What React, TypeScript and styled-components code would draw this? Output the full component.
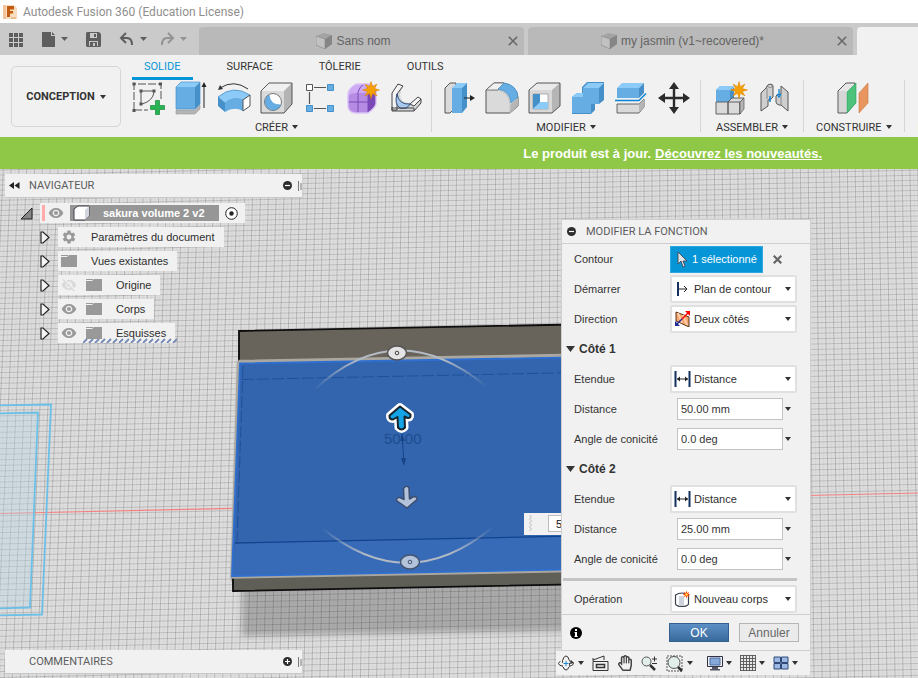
import React from "react";
import styled, { createGlobalStyle } from "styled-components";
import { MdVisibility, MdVisibilityOff, MdSettings } from "react-icons/md";
import { FaRegHandPaper } from "react-icons/fa";

const sans = '"Liberation Sans", Arial, sans-serif';
const caps = 'Roboto, "Liberation Sans", sans-serif';

const GlobalStyle = createGlobalStyle`
  *, *::before, *::after { box-sizing: border-box; }
  html, body { margin: 0; }
  body { font-family: ${sans}; font-size: 11px; color: #333; background: #dedede; }
  button, input, select { font: inherit; color: inherit; margin: 0; }
  button { padding: 0; border: 0; background: none; white-space: nowrap; cursor: pointer; }
  svg { display: block; flex: none; }
`;

const Page = styled.div`
  display: flex;
  flex-direction: column;
  min-height: 100vh;
  overflow: hidden;
`;

/* ---------- window title and document tabs ---------- */

const TitleBar = styled.header`
  display: flex;
  align-items: center;
  gap: 5px;
  height: 23px;
  padding-left: 2px;
  background: #fff;
  color: #8f8f8f;
  font: 12px/16px ${caps};
`;

const TabBar = styled.div`
  display: flex;
  align-items: stretch;
  height: 32px;
  background: #cacaca;
  overflow: hidden;
`;

const QuickBar = styled.div`
  display: flex;
  align-items: center;
  flex: 0 0 199px;
  padding-left: 8px;
  color: #5e5e5e;
`;

const QuickButton = styled.button<{ $gap: number; $dim?: boolean }>`
  display: flex;
  align-items: center;
  gap: 5px;
  margin-right: ${(p) => p.$gap}px;
  opacity: ${(p) => (p.$dim ? 0.5 : 1)};
`;

const DocTab = styled.div<{ $active?: boolean }>`
  display: flex;
  align-items: center;
  flex: 0 0 325px;
  margin: 4px 4px 0 0;
  padding-right: 6px;
  border-radius: 4px 4px 0 0;
  background: ${(p) => (p.$active ? "#f1f1f1" : "#b9b9b9")};
`;

const DocTitle = styled.button`
  display: flex;
  align-items: center;
  justify-content: center;
  gap: 4px;
  flex: 1;
  color: #636363;
  font-size: 12px;
`;

/* ---------- ribbon ---------- */

const Ribbon = styled.section`
  display: flex;
  height: 82px;
  background: #f1f1f1;
  overflow: hidden;
  font-family: ${caps};
`;

const WorkspaceButton = styled.button`
  display: flex;
  align-items: center;
  justify-content: center;
  gap: 5px;
  flex: 0 0 110px;
  height: 61px;
  margin: 11px 4px 0 11px;
  border: 1px solid #d6d6d6;
  border-radius: 5px;
  font-weight: 700;
`;

const RibbonMain = styled.div`
  flex: 1;
  min-width: 0;
`;

const RibbonTabs = styled.nav`
  display: flex;
  gap: 22px;
  padding-left: 7px;
`;

const RibbonTab = styled.button<{ $active?: boolean }>`
  height: 25px;
  padding: 0 12px;
  border-bottom: 3px solid ${(p) => (p.$active ? "#0696d7" : "transparent")};
  color: ${(p) => (p.$active ? "#0696d7" : "#333")};
`;

const Groups = styled.div`
  display: flex;
`;

const Group = styled.div<{ $left: number; $right: number }>`
  display: flex;
  flex-direction: column;
  align-items: center;
  flex: none;
  height: 52px;
  padding: 0 ${(p) => p.$right}px 0 ${(p) => p.$left}px;
  border-right: 1px solid #d6d6d6;
`;

const Tools = styled.div`
  display: flex;
`;

const Tool = styled.button`
  display: grid;
  place-items: center;
  width: 43px;
  height: 36px;
`;

const GroupLabel = styled.button`
  display: flex;
  align-items: center;
  gap: 4px;
  flex: none;
  height: 22px;
`;

const Notice = styled.div`
  display: flex;
  justify-content: flex-end;
  align-items: center;
  gap: 4px;
  height: 32px;
  padding-right: 96px;
  background: #8fc846;
  color: #fff;
  font-size: 13px;
  font-weight: 700;
  a { color: inherit; }
`;

/* ---------- canvas ---------- */

const Canvas = styled.main`
  position: relative;
  display: flex;
  justify-content: space-between;
  flex: 1;
`;

const Scene = styled.svg`
  position: absolute;
  inset: 0;
  width: 100%;
  height: 100%;
`;

const LeftDock = styled.div`
  position: relative;
  display: flex;
  flex-direction: column;
  justify-content: space-between;
  width: 298px;
  margin: 5px 0 4px 5px;
`;

const RightDock = styled.div`
  position: relative;
  display: flex;
  flex-direction: column;
  align-items: flex-end;
  justify-content: space-between;
  width: 255px;
  margin: 50px 107px 3px 0;
`;

const PanelBar = styled.div`
  display: flex;
  align-items: center;
  gap: 6px;
  height: 24px;
  padding: 0 0 0 4px;
  border-bottom: 1px solid #c8c8c8;
  border-right: 1px solid #d0d0d0;
  background: #f1f1f1;
  color: #5c5c5c;
  font-family: ${caps};
`;

const PanelTitle = styled.span<{ $indent?: boolean }>`
  flex: 1;
  padding-left: ${(p) => (p.$indent ? 20 : 3)}px;
`;

const Tree = styled.ul`
  display: flex;
  flex-direction: column;
  gap: 4px;
  margin: 5px 0 0;
  padding: 0;
  list-style: none;
`;

const TreeRow = styled.li<{ $root?: boolean }>`
  display: flex;
  align-items: center;
  gap: ${(p) => (p.$root ? 7 : 8)}px;
  padding-left: ${(p) => (p.$root ? 15 : 35)}px;
`;

const TreeItem = styled.div`
  display: flex;
  align-items: center;
  gap: 9px;
  height: 20px;
  padding: 0 9px 0 3px;
  background: #f1f1f1;
  color: #2e2e2e;
`;

const SketchItem = styled(TreeItem)`
  position: relative;
`;

const HatchSvg = styled.svg`
  position: absolute;
  left: 25px;
  bottom: 0;
`;

const TreeLabel = styled.span`
  padding-left: 5px;
`;

const RootItem = styled.div`
  display: flex;
  align-items: center;
  gap: 6px;
  height: 20px;
  padding: 0 7px 0 2px;
  background: #f1f1f1;
`;

const Stripe = styled.span`
  width: 3px;
  height: 16px;
  margin-right: -3px;
  background: #ffabab;
`;

const RootName = styled.button`
  display: flex;
  align-items: center;
  gap: 13px;
  height: 16px;
  padding: 0 14px 0 3px;
  background: #969696;
  color: #fff;
  font-size: 11px;
  font-weight: 700;
`;

const FloatingValue = styled.label`
  position: absolute;
  left: 524px;
  top: 344px;
  display: flex;
  align-items: center;
  gap: 16px;
  padding: 2px 2px 3px 5px;
  background: #f1f1f1;
  input {
    width: 60px;
    height: 17px;
    padding: 0 7px;
    border: 1px solid #bdbdbd;
    background: #fff;
    color: #111;
  }
`;

/* ---------- edit-feature dialog ---------- */

const Dialog = styled.form`
  width: 250px;
  border: 1px solid #cfcfcf;
  background: #f1f1f1;
`;

const DialogHead = styled.div`
  display: flex;
  align-items: center;
  gap: 10px;
  height: 24px;
  padding-left: 5px;
  border-bottom: 1px solid #cfcfcf;
  color: #5c5c5c;
  font-family: ${caps};
`;

const Field = styled.div`
  display: grid;
  grid-template-columns: 96px 1fr;
  align-items: center;
  height: 30px;
  padding: 0 12px;
`;

const Section = styled.button`
  display: flex;
  align-items: center;
  gap: 4px;
  height: 30px;
  padding-left: 4px;
  font-weight: 700;
  font-size: 12px;
`;

const SelectBox = styled.div`
  display: flex;
  align-items: center;
  gap: 3px;
  height: 28px;
  width: 127px;
  padding: 0 4px 0 2px;
  border: 2px solid #e0e0e0;
  border-radius: 2px;
  background: #fff;
  select {
    flex: 1;
    min-width: 0;
    padding: 0;
    border: 0;
    background: transparent;
    appearance: none;
    color: #2e2e2e;
  }
`;

const ValueBox = styled.div`
  display: flex;
  align-items: center;
  gap: 2px;
  padding-left: 7px;
  input {
    width: 106px;
    height: 22px;
    padding: 0 3px;
    border: 1px solid #c3c3c3;
    background: #fff;
  }
`;

const Picker = styled.div`
  display: flex;
  align-items: center;
  gap: 10px;
`;

const PickButton = styled.button`
  display: flex;
  align-items: center;
  gap: 4px;
  height: 27px;
  padding: 0 5px 0 6px;
  border: 1px solid #2ea8e0;
  background: #0696d7;
  color: #fff;
`;

const Divider = styled.hr`
  height: 3px;
  margin: 4px 13px 3px 1px;
  border: 0;
  background: #c4c4c4;
`;

const DialogFoot = styled.div`
  display: flex;
  align-items: center;
  gap: 10px;
  height: 36px;
  padding: 0 11px 0 8px;
  border-top: 1px solid #cfcfcf;
`;

const Spacer = styled.span`
  flex: 1;
`;

const DialogButton = styled.button<{ $primary?: boolean }>`
  width: 60px;
  height: 19px;
  border: 1px solid ${(p) => (p.$primary ? "#35618f" : "#b5b5b5")};
  background: ${(p) => (p.$primary ? "linear-gradient(#5b90c4, #3a6a9c)" : "#ebebeb")};
  color: ${(p) => (p.$primary ? "#fff" : "#686868")};
  font-size: 12px;
`;

const ViewBar = styled.div`
  display: flex;
  align-items: center;
  justify-content: space-between;
  align-self: stretch;
  height: 24px;
  margin-right: 1px;
  padding: 0 12px 0 2px;
  background: #f1f1f1;
`;

const ViewGroup = styled.div`
  display: flex;
  align-items: center;
  gap: 8px;
`;

const ViewTool = styled.button`
  display: flex;
  align-items: center;
  gap: 3px;
`;

/* ---------- small glyphs ---------- */

const Caret = ({ w = 6, color = "#333" }: { w?: number; color?: string }) => (
  <svg width={w} height={w > 8 ? 6 : 4} viewBox="0 0 6 5" preserveAspectRatio="none"><path d="M0 0h6L3 5z" fill={color} /></svg>
);

const Dot = ({ plus }: { plus?: boolean }) => (
  <svg width="9" height="9" viewBox="0 0 9 9">
    <circle cx="4.5" cy="4.5" r="4.5" fill="#2d2d2d" />
    <path d={plus ? "M2 4.5h5M4.5 2v5" : "M2 4.5h5"} stroke="#fff" strokeWidth="1.2" />
  </svg>
);

const Cross = ({ size = 9, bold }: { size?: number; bold?: boolean }) => (
  <svg width={size} height={size} viewBox="0 0 9 9"><path d="M.7.7l7.6 7.6M8.3.7L.7 8.3" stroke="#666" strokeWidth={bold ? 2.2 : 1.4} /></svg>
);

const Grip = () => (
  <svg width="4" height="12" viewBox="0 0 4 12"><path d="M.5 1v10M3 3v7" stroke="#777" /></svg>
);

const AppLogo = () => (
  <svg width="16" height="16" viewBox="0 0 16 16">
    <path d="M1 1h11l3 3v11H1z" fill="#f8dcc0" />
    <path d="M1 1h3v14H1z" fill="#f3c49a" />
    <path d="M5 2h7v3H8v2h3v2H8v4H5z" fill="#bf5b13" />
    <path d="M8 5h4v1H8zM8 9h3v1H8z" fill="#e79a4d" />
    <path d="M9 14h5" stroke="#e8a05c" />
  </svg>
);

const DocCube = () => (
  <svg width="16" height="16" viewBox="0 0 16 16">
    <path d="M0 3L8 0l8 2v9l-7 5-9-4z" fill="#a3a3a3" />
    <path d="M0 3l9 3v10l-9-4z" fill="#c1c1c1" stroke="#8f8f8f" strokeWidth=".7" />
    <path d="M9 6l7-4v9l-7 5z" fill="#858585" />
  </svg>
);

const Folder = () => (
  <svg width="16" height="14" viewBox="0 0 16 14"><path d="M0 1h7v1H0zM0 3h6l2-2h8v12H0z" fill="#999" /></svg>
);

const Expander = () => (
  <svg width="10" height="13" viewBox="0 0 10 13"><path d="M1 1h2l6 5.500L3 12H1z" fill="#f4f4f4" stroke="#222" strokeWidth="1.200" /></svg>
);

/* ---------- ribbon icons, 34 x 34 ---------- */

const Icon34 = ({ children }: { children: React.ReactNode }) => (
  <svg width="34" height="34" viewBox="0 0 34 34" fill="none">{children}</svg>
);
const G = "#555";
const burst = (cx: number, cy: number, R: number, r: number, n: number) =>
  Array.from({ length: n * 2 }, (_, i) => {
    const a = (Math.PI * i) / n - Math.PI / 2;
    const d = i % 2 ? r : R;
    return `${(cx + d * Math.cos(a)).toFixed(1)},${(cy + d * Math.sin(a)).toFixed(1)}`;
  }).join(" ");

const createIcons = [
  ["Esquisse", <Icon34 key="a">
    <path d="M3 29V3h27v17M3 29h14" stroke={G} strokeDasharray="8 2" />
    <path d="M10 10h12M10 10v12M23 11q-1 9-12 12" stroke={G} />
    <path d="M1.500 1.500h3v3h-3zM28 1.500h3v3h-3zM1.500 28h3v3h-3zM8.500 8.500h3v3h-3zM21.500 8.500h3v3h-3zM8.500 21.500h3v3h-3z" fill={G} />
    <path d="M24.500 19.500h4v5h5v4h-5v5h-4v-5h-5v-4h5z" fill="#29b352" stroke="#168a3a" strokeWidth=".7" />
  </Icon34>],
  ["Extrusion", <Icon34 key="b">
    <path d="M2 29h19l5-5v4l-5 5H2z" fill="#b5b5b5" stroke="#999" strokeWidth=".6" />
    <path d="M2 6l5-5h19l-5 5z" fill="#8ccaf8" /><path d="M2 6h19v22H2z" fill="#66ade3" /><path d="M21 6l5-5v22l-5 5z" fill="#4590c9" />
    <path d="M2 6l5-5h19v22l-5 5H2z" stroke="#4a94cd" strokeWidth=".7" />
    <path d="M30 5v22" stroke="#222" /><path d="M27.500 6L30 1l2.500 5z" fill="#222" />
  </Icon34>],
  ["Révolution", <Icon34 key="c">
    <path d="M3 7Q17-2 31 8" stroke="#333" /><path d="M1 9l2-5 3 4z" fill="#333" />
    <path d="M1 16Q16 3 33 14l-7 5Q17 15 8 22z" fill="#8ccaf8" stroke="#3f87bd" strokeWidth=".7" />
    <path d="M1 16l7 6v9l-7-6z" fill="#4590c9" /><path d="M8 22q8-7 18-3v11q-9-5-18 1z" fill="#66ade3" />
    <path d="M26 19l7-5v11l-7 5z" fill="#fff" stroke="#555" />
  </Icon34>],
  ["Perçage", <Icon34 key="d">
    <path d="M1 10l8-8h23l-8 8z" fill="#f0f0f0" /><path d="M24 10l8-8v21l-8 9z" fill="#b4b4b4" /><path d="M1 10h23v22H1z" fill="#dadada" />
    <path d="M1 10l8-8h23v21l-8 9H1z" stroke={G} />
    <circle cx="13" cy="21" r="8.500" fill="#fff" stroke="#777" />
    <path d="M9 14a8 8 0 1 0 11.500 10Q10 24 9 14z" fill="#66ade3" stroke="#4590c9" strokeWidth=".6" />
  </Icon34>],
  ["Réseau", <Icon34 key="e">
    <path d="M11 6.500h12M6.500 11v12M11 27.500h12" stroke={G} strokeWidth="1.200" />
    <path d="M3.500 3.500h6v6h-6z" fill="#fff" stroke={G} />
    <path d="M24.500 3.500h6v6h-6zM3.500 24.500h6v6h-6zM24.500 24.500h6v6h-6z" fill="#66ade3" stroke="#4590c9" />
  </Icon34>],
  ["Forme", <Icon34 key="f">
    <path d="M2 13q0-5 8-10h14q7 2 6 9v11q-1 4-8 9H9q-7-1-7-7z" fill="#b58be4" />
    <path d="M2 13q1-4 8-10h14q5 1 6 4l-7 5H9q-4 0-7 3z" fill="#cfaaf4" />
    <path d="M22 12q6-1 8-5v16q-1 4-8 9z" fill="#7a49b6" />
    <path d="M2 21h20l8-6M12 32V11q2-6 6-8M22 32V13" stroke="#7a49b6" />
    <path d="M2 13q0-5 8-10h14q7 2 6 9v11q-1 4-8 9H9q-7-1-7-7z" stroke="#dcc3f7" strokeWidth="1.300" />
    <polygon points={burst(25, 9, 8.5, 3.8, 8)} fill="#f7a100" stroke="#d98200" strokeWidth=".5" />
  </Icon34>],
  ["Bride", <Icon34 key="g">
    <path d="M3 12L9 3l5 2-3 9q1 8 10 8l8-6 3 2v5l-8 7H3z" fill="#d4d7da" />
    <path d="M3 12L9 3l5 2-6 8v16H3z" fill="#f4f4f4" stroke="#444" /><path d="M21 23l8-7 3 2-7 7z" fill="#f7f7f7" stroke="#444" />
    <path d="M8 13q2 11 13 10-3 6-10 4-6-4-3-14z" fill="#a9c9ee" stroke="#314d78" />
    <path d="M3 26v4h22l7-8v-4M3 27h22v3" stroke="#444" />
  </Icon34>],
] as [string, React.ReactNode][];

const modifyIcons = [
  ["Appuyer/Tirer", <Icon34 key="a">
    <path d="M3 7l5-5h6v24l-6 6H3z" fill="#dadada" stroke={G} />
    <path d="M10 7l5-5h10l-5 5z" fill="#8ccaf8" /><path d="M10 7h10v25H10z" fill="#66ade3" /><path d="M20 7l5-5v24l-5 6z" fill="#4590c9" />
    <path d="M22 17h8" stroke="#222" /><path d="M28 14l5 3-5 3z" fill="#222" />
  </Icon34>],
  ["Congé", <Icon34 key="b">
    <path d="M1 9l8-7h9q14 2 15 15v8l-8 7H1z" fill="#dadada" stroke={G} />
    <path d="M1 9h12q11 2 12 14v9" stroke="#c0c0c0" /><path d="M1 9l8-7h10l-6 7z" fill="#f0f0f0" stroke={G} strokeWidth=".7" />
    <path d="M13 8l6-6q13 2 14 14l-7 6Q25 10 13 8z" fill="#66ade3" stroke="#4590c9" strokeWidth=".7" />
    <path d="M26 23l7-6v8l-8 7z" fill="#b5b5b5" />
  </Icon34>],
  ["Coque", <Icon34 key="c">
    <path d="M1 9l8-7h23v23l-8 7H1z" fill="#eaeaea" /><path d="M24 9l8-7v23l-8 7z" fill="#b5b5b5" /><path d="M1 9h23v23H1z" fill="#d8d8d8" />
    <path d="M1 9l8-7h23v23l-8 7H1z" stroke={G} />
    <path d="M5 13h15v15H5z" fill="#fff" stroke="#888" strokeWidth=".6" /><path d="M5 13h7v9l-7 6z" fill="#4590c9" /><path d="M5 28l7-7h8v7z" fill="#8ccaf8" />
  </Icon34>],
  ["Combiner", <Icon34 key="d">
    <path d="M1 16l5-4h5V6l5-5h17v18l-5 4h-4v6l-4 4H1z" fill="#4590c9" />
    <path d="M1 16h11V7h16v16h-8v9H1z" fill="#66ade3" /><path d="M1 16l5-4h6v4zM12 7l5-5h16l-5 5z" fill="#8ccaf8" />
  </Icon34>],
  ["Scinder", <Icon34 key="e">
    <path d="M3 7l5-5h22l-5 5z" fill="#8ccaf8" /><path d="M3 7h22v10H3z" fill="#66ade3" /><path d="M25 7l5-5v10l-5 5z" fill="#4590c9" />
    <path d="M1 19.500h24l7-7" stroke="#0a84d8" strokeWidth="1.500" />
    <path d="M3 23h22l5-5v8l-5 6H3z" fill="#dadada" stroke={G} strokeWidth=".9" /><path d="M25 23l5-5v8l-5 6z" fill="#b5b5b5" />
  </Icon34>],
  ["Déplacer", <Icon34 key="f">
    <path d="M17 5v24M5 17h24" stroke="#2b2b2b" strokeWidth="2.400" />
    <path d="M17 1l5 7H12zM17 33l5-7H12zM1 17l7-5v10zM33 17l-7-5v10z" fill="#2b2b2b" />
  </Icon34>],
] as [string, React.ReactNode][];

const assembleIcons = [
  ["Nouveau composant", <Icon34 key="a">
    <path d="M2 9l4-4h14l-4 5v11H2z" fill="#66ade3" /><path d="M2 9l4-4h14l-4 4z" fill="#8ccaf8" /><path d="M16 10l4-4v11l-2 4h-2z" fill="#4590c9" />
    <path d="M2 21h12v12H2zM14 21l4-4h12l-4 4v12H14z" fill="#dadada" stroke={G} strokeWidth=".9" /><path d="M14 21h12v12" stroke={G} strokeWidth=".9" />
    <path d="M26 21l4-4v11l-4 5z" fill="#b5b5b5" stroke={G} strokeWidth=".7" />
    <polygon points={burst(25, 9, 8.5, 3.6, 8)} fill="#f7a100" stroke="#d98200" strokeWidth=".5" />
  </Icon34>],
  ["Liaison", <Icon34 key="b">
    <path d="M4 12l5-5q1-4 5-4 3 1 2 4v9q-2 3-5 3v6l-7 5z" fill="#cfcfcf" stroke={G} /><path d="M10 7v11" stroke="#888" /><ellipse cx="13" cy="5" rx="2.500" ry="1.300" fill="#f4f4f4" stroke={G} strokeWidth=".7" />
    <path d="M13 15v6" stroke="#0a84d8" strokeWidth="1.500" />
    <path d="M24 5l7 6v19l-7-6h-2q-3-1-3-3v-6q1-2 5-2z" fill="#cfcfcf" stroke={G} /><path d="M24 14v10" stroke="#888" />
    <path d="M22 8v6M20 13l2 3 2-3" stroke="#0a84d8" strokeWidth="1.300" />
  </Icon34>],
] as [string, React.ReactNode][];

const buildIcons = [
  ["Plan de décalage", <Icon34 key="a">
    <path d="M1 10l8-8h9v20l-8 10H1z" fill="#e6e6e6" stroke={G} /><path d="M2 10h7v21H2z" fill="#d6d6d6" />
    <path d="M10 11l9-9v20l-9 10z" fill="#4cc27b" stroke="#2f9d5b" strokeWidth=".6" />
    <path d="M22 12l9-10v20l-9 10z" fill="#e8955f" stroke="#c77843" strokeWidth=".6" />
  </Icon34>],
] as [string, React.ReactNode][];

const ribbonGroups = [
  { label: "CRÉER", tools: createIcons, left: 1, right: 4 },
  { label: "MODIFIER", tools: modifyIcons, left: 5, right: 5 },
  { label: "ASSEMBLER", tools: assembleIcons, left: 8, right: 8 },
  { label: "CONSTRUIRE", tools: buildIcons, left: 12, right: 12 },
  { label: "INSPECTER", tools: [["Mesurer", null]] as [string, React.ReactNode][], left: 13, right: 12 },
];

/* ---------- dialog icons ---------- */

const PlaneIcon = () => (
  <svg width="17" height="16" viewBox="0 0 17 16" fill="none"><path d="M4 1v14" stroke="#14305e" strokeWidth="2" /><path d="M5 8h8M10 5l3 3-3 3" stroke="#222" /></svg>
);
const SpanIcon = () => (
  <svg width="17" height="16" viewBox="0 0 17 16" fill="none"><path d="M1.500 0v16M15.500 0v16" stroke="#14305e" strokeWidth="2" /><path d="M3 8h11" stroke="#222" /><path d="M3 8l3-2.500v5zM14 8l-3-2.500v5z" fill="#222" /></svg>
);
const TwoSidesIcon = () => (
  <svg width="17" height="16" viewBox="0 0 17 16" fill="none">
    <path d="M2 1l13 5v10L2 10z" fill="#f6a46c" stroke="#5b351c" /><path d="M4 2l4 10M9 4l4 10" stroke="#ffd0ac" strokeWidth="2" />
    <path d="M8 8l6-6" stroke="#f00" strokeWidth="1.500" /><path d="M11 0h5v5z" fill="#f00" />
    <path d="M8 8l-5 5" stroke="#232a94" strokeWidth="1.500" /><path d="M1 10v5h5z" fill="#232a94" />
  </svg>
);
const BodyIcon = () => (
  <svg width="17" height="16" viewBox="0 0 17 16">
    <path d="M1.500 4v9q1 2.500 6.500 2.500t6.500-2.500V4Q8 0 1.500 4z" fill="#fff" stroke="#3a4450" strokeWidth="1.200" />
    <path d="M5 5h5v10H5z" fill="#cdd3dc" /><polygon points={burst(12.5, 3.5, 4, 1.7, 8)} fill="#ff3b00" /><circle cx="12.500" cy="3.500" r="1.200" fill="#ffe94d" />
  </svg>
);
const CursorIcon = () => (
  <svg width="11" height="17" viewBox="0 0 11 17"><path d="M1 1v12l3-3 2 6 2-1-2-5h4z" fill="#dfe6ea" stroke="#445" strokeWidth=".9" /></svg>
);

const DropField = ({ id, label, value, icon }: { id: string; label: string; value: string; icon: React.ReactNode }) => (
  <Field>
    <label htmlFor={id}>{label}</label>
    <SelectBox>
      {icon}
      <select id={id} defaultValue={value}><option>{value}</option></select>
      <Caret />
    </SelectBox>
  </Field>
);

const ValueField = ({ id, label, value }: { id: string; label: string; value: string }) => (
  <Field>
    <label htmlFor={id}>{label}</label>
    <ValueBox><input id={id} defaultValue={value} /><Caret /></ValueBox>
  </Field>
);

const Side = ({ n, distance }: { n: number; distance: string }) => (
  <>
    <Section type="button"><Caret w={9} />Côté {n}</Section>
    <DropField id={`extent${n}`} label="Etendue" value="Distance" icon={<SpanIcon />} />
    <ValueField id={`distance${n}`} label="Distance" value={distance} />
    <ValueField id={`taper${n}`} label="Angle de conicité" value="0.0 deg" />
  </>
);

/* ---------- 3D scene ---------- */

const verticals = (from: number, step: number) =>
  Array.from({ length: Math.ceil(1100 / step) }, (_, i) => {
    const x = from + i * step;
    const t = (x - 650) * 0.00007;
    return `M${(x - t * 350).toFixed(1)} 150L${(x + t * 200).toFixed(1)} 700`;
  }).join("");

const horizontals = (offset: number) => {
  let d = "";
  for (let y = 160 + offset, step = 5; y < 710; y += step, step = 5 + (y - 160) * 0.0018) {
    d += `M0 ${y.toFixed(1)}L918 ${(y - 20).toFixed(1)}`;
  }
  return d;
};

const upArrow = "M400 406.500L410.500 414.500Q411 418.500 407.500 418L404.500 416.500 405 427.500Q401.500 431.500 398 427.500L397.500 417 393 419.500Q389 419.500 389.500 415.500z";
const downArrow = "M407 508L396.500 500.500Q396.500 497 400 497.500L404 499.500 403.500 488.500Q406.500 484.500 409 488L409.500 499 413.500 496.500Q417.500 496.500 417 499.500z";

const CanvasScene = () => (
  <Scene viewBox="0 169 918 509" preserveAspectRatio="xMinYMin slice" fill="none" aria-hidden="true">
    <defs>
      <linearGradient id="fade" x1="0" x2="1" y1="0" y2="0">
        <stop offset="0" stopColor="#c4c8cc" stopOpacity="0" /><stop offset=".25" stopColor="#b3bac4" />
        <stop offset=".75" stopColor="#b3bac4" /><stop offset="1" stopColor="#c4c8cc" stopOpacity="0" />
      </linearGradient>
      <filter id="soft"><feGaussianBlur stdDeviation="3" /></filter>
      <clipPath id="below"><path d="M225 591l500-10v80H225z" /></clipPath>
    </defs>
    <path d="M0 169h918v509H0z" fill="#dedede" />
    <path d={verticals(-60, 8)} stroke="#000" strokeOpacity=".16" />
    <path d={verticals(-56, 8)} stroke="#000" strokeOpacity=".03" />
    <path d={horizontals(0)} stroke="#000" strokeOpacity=".15" />
    <path d={horizontals(2.5)} stroke="#000" strokeOpacity=".02" />
    <path d="M0 513.500L918 493" stroke="#f58080" strokeWidth="1.200" />

    <path d="M-5 413l43-1-8 195-35 1z" fill="#b4d7e8" fillOpacity=".35" />
    <path d="M-5 405.500l56-1-9 210-47 1M-5 413.500l43-1-8 195-35 1" stroke="#6cc0e8" strokeWidth="1.800" />

    <g clipPath="url(#below)"><path d="M242 560h500v68l-500 8z" fill="#000" fillOpacity=".23" filter="url(#soft)" /></g>
    <path d="M239 331l461-9v260l-467 9-2-16z" fill="#5f5f58" />
    <path d="M239 331l461-9v32l-461 8z" fill="#68645b" />
    <path d="M239 361v-30l461-9M233 578v13l467-9" stroke="#0d0d0d" strokeWidth="1.800" />
    <path d="M238.500 361L232 577l468-9M238.500 361.500L700 353" stroke="#a9a79f" strokeWidth="3.500" />
    <path d="M240 363.500l460-9V567l-468 9z" fill="#3365ae" />
    <path d="M235 543l465-9v33l-468 9z" fill="#386bb7" />
    <path d="M700 355l-460 8.500L232 576l468-9" stroke="#2f6fd0" strokeWidth="1.800" />
    <path d="M235 543l465-9.500" stroke="#12438f" strokeWidth="1.300" />
    <path d="M242 379.500L700 370M243 366l-6 176" stroke="#1f5099" strokeDasharray="12 3" />
    <path d="M314 390Q396 313 486 386" stroke="url(#fade)" strokeWidth="2" />
    <path d="M322 528Q407 598 493 527" stroke="url(#fade)" strokeWidth="2" />
    <ellipse cx="397" cy="353" rx="9.500" ry="7" fill="#e4e4e4" stroke="#555" strokeWidth="1.500" />
    <circle cx="397" cy="353" r="1.800" stroke="#444" />
    <ellipse cx="410" cy="562" rx="9.500" ry="7" fill="#b4c3dc" stroke="#45556e" strokeWidth="1.500" />
    <circle cx="410" cy="562" r="1.800" stroke="#45556e" />
    <text x="384" y="444" fontFamily={sans} fontSize="15" fill="#1e4d90">50.00</text>
    <path d="M402 434l2 30" stroke="#174488" /><path d="M401 458h5l-2 8zM400 441l2-7 3 7z" fill="#174488" />
    <g strokeLinejoin="round">
      <path d={upArrow} stroke="#fff" strokeWidth="7" />
      <path d={upArrow} fill="#12a4e6" stroke="#17242c" strokeWidth="2" />
      <path d={downArrow} fill="#b4c3dc" stroke="#3c4d6b" strokeWidth="1.500" />
    </g>
  </Scene>
);

const Wave = () => (
  <svg width="3" height="17" viewBox="0 0 3 17" fill="none"><path d="M.5 0l2 2-2 2 2 2-2 2 2 2-2 2 2 2-2 2" stroke="#bbb" /></svg>
);

const Eye = () => <MdVisibility size={16} color="#999" />;

const Hatch = () => (
  <HatchSvg width="94" height="5" viewBox="0 0 94 5" fill="none">
    <path d={Array.from({ length: 16 }, (_, i) => `M${i * 6} 5l4-4`).join("")} stroke="#7388b3" strokeWidth="1.800" />
  </HatchSvg>
);

export default function App() {
  return (
    <Page>
      <GlobalStyle />
      <TitleBar><AppLogo />Autodesk Fusion 360 (Education License)</TitleBar>

      <TabBar>
        <QuickBar>
          <QuickButton $gap={18} aria-label="Panneau de données">
            <svg width="15" height="15" viewBox="0 0 15 15"><path d="M1 1h4v4H1zM6 1h4v4H6zM11 1h4v4h-4zM1 6h4v4H1zM6 6h4v4H6zM11 6h4v4h-4zM1 11h4v4H1zM6 11h4v4H6zM11 11h4v4h-4z" fill="currentColor" /></svg>
          </QuickButton>
          <QuickButton $gap={18} aria-label="Fichier">
            <svg width="15" height="17" viewBox="0 0 15 17"><path d="M1 1h9v4h4v11H1zM11 1l3 3h-3z" fill="currentColor" /></svg>
            <Caret w={7} color="#5e5e5e" />
          </QuickButton>
          <QuickButton $gap={18} aria-label="Enregistrer">
            <svg width="15" height="15" viewBox="0 0 15 15"><path d="M1 0h12l2 2v12l-1 1H1l-1-1V1zM4 1v5h7V1zM3 9v5h9V9z" fill="currentColor" fillRule="evenodd" /><path d="M8 2h2v3H8zM4 10h7v4H9v-3H7v3H4z" fill="currentColor" /></svg>
          </QuickButton>
          <QuickButton $gap={12} aria-label="Annuler l'action">
            <svg width="16" height="14" viewBox="0 0 16 14" fill="none"><path d="M7 1L2 6l5 5M2 6h6q5 0 5 7" stroke="currentColor" strokeWidth="2" /></svg>
            <Caret w={7} color="#5e5e5e" />
          </QuickButton>
          <QuickButton $gap={0} $dim aria-label="Rétablir l'action">
            <svg width="16" height="14" viewBox="0 0 16 14" fill="none"><path d="M9 1l5 5-5 5M14 6H8q-5 0-5 7" stroke="currentColor" strokeWidth="2" /></svg>
            <Caret w={7} color="#5e5e5e" />
          </QuickButton>
        </QuickBar>
        <DocTab><DocTitle><DocCube />Sans nom</DocTitle><button aria-label="Fermer Sans nom"><Cross size={10} /></button></DocTab>
        <DocTab><DocTitle><DocCube />my jasmin (v1~recovered)*</DocTitle><button aria-label="Fermer my jasmin"><Cross size={10} /></button></DocTab>
        <DocTab $active />
      </TabBar>

      <Ribbon>
        <WorkspaceButton>CONCEPTION <Caret /></WorkspaceButton>
        <RibbonMain>
          <RibbonTabs>
            <RibbonTab $active>SOLIDE</RibbonTab>
            <RibbonTab>SURFACE</RibbonTab>
            <RibbonTab>TÔLERIE</RibbonTab>
            <RibbonTab>OUTILS</RibbonTab>
          </RibbonTabs>
          <Groups>
            {ribbonGroups.map(({ label, tools, left, right }) => (
              <Group key={label} $left={left} $right={right}>
                <Tools>{tools.map(([name, icon]) => <Tool key={name} aria-label={name}>{icon}</Tool>)}</Tools>
                <GroupLabel>{label}<Caret /></GroupLabel>
              </Group>
            ))}
          </Groups>
        </RibbonMain>
      </Ribbon>

      <Notice>Le produit est à jour. <a href="#nouveautes">Découvrez les nouveautés.</a></Notice>

      <Canvas>
        <CanvasScene />
        <FloatingValue><Wave /><input aria-label="Distance" defaultValue="50.00" /></FloatingValue>

        <LeftDock>
          <div>
            <PanelBar>
              <svg width="11" height="7" viewBox="0 0 11 7"><path d="M5 0v7L0 3.500zM10.500 0v7l-5-3.500z" fill="#222" /></svg>
              <PanelTitle>NAVIGATEUR</PanelTitle><Dot /><Grip />
            </PanelBar>
            <Tree>
              <TreeRow $root>
                <svg width="13" height="13" viewBox="0 0 13 13"><path d="M12 1v11H1z" fill="#888" stroke="#222" /></svg>
                <RootItem>
                  <Stripe /><Eye />
                  <RootName>
                    <svg width="17" height="16" viewBox="0 0 17 16"><path d="M1 4l4-3h11v10l-4 4H1z" fill="#fff" stroke="#3c4049" /><path d="M12 5l4-4v10l-4 4z" fill="#d3d6dc" /></svg>
                    sakura volume 2 v2
                  </RootName>
                  <svg width="13" height="13" viewBox="0 0 13 13"><circle cx="6.500" cy="6.500" r="5.800" fill="#fff" stroke="#222" /><circle cx="6.500" cy="6.500" r="2.200" fill="#222" /></svg>
                </RootItem>
              </TreeRow>
              <TreeRow><Expander /><TreeItem><MdSettings size={16} color="#999" /><TreeLabel>Paramètres du document</TreeLabel></TreeItem></TreeRow>
              <TreeRow><Expander /><TreeItem><Folder /><TreeLabel>Vues existantes</TreeLabel></TreeItem></TreeRow>
              <TreeRow><Expander /><TreeItem><MdVisibilityOff size={16} color="#dadada" /><Folder /><TreeLabel>Origine</TreeLabel></TreeItem></TreeRow>
              <TreeRow><Expander /><TreeItem><Eye /><Folder /><TreeLabel>Corps</TreeLabel></TreeItem></TreeRow>
              <TreeRow><Expander /><SketchItem><Eye /><Folder /><TreeLabel>Esquisses</TreeLabel><Hatch /></SketchItem></TreeRow>
            </Tree>
          </div>
          <PanelBar><PanelTitle $indent>COMMENTAIRES</PanelTitle><Dot plus /><Grip /></PanelBar>
        </LeftDock>

        <RightDock>
          <Dialog onSubmit={(e) => e.preventDefault()}>
            <DialogHead><Dot />MODIFIER LA FONCTION</DialogHead>
            <Field>
              <span>Contour</span>
              <Picker>
                <PickButton type="button"><CursorIcon />1 sélectionné</PickButton>
                <button type="button" aria-label="Effacer la sélection"><Cross bold /></button>
              </Picker>
            </Field>
            <DropField id="start" label="Démarrer" value="Plan de contour" icon={<PlaneIcon />} />
            <DropField id="direction" label="Direction" value="Deux côtés" icon={<TwoSidesIcon />} />
            <Side n={1} distance="50.00 mm" />
            <Side n={2} distance="25.00 mm" />
            <Divider />
            <DropField id="operation" label="Opération" value="Nouveau corps" icon={<BodyIcon />} />
            <DialogFoot>
              <svg width="12" height="12" viewBox="0 0 12 12"><circle cx="6" cy="6" r="6" fill="#000" /><path d="M5 2h2v2H5zM4.500 5H7v4h.700v1H4.500V9H5V6h-.500z" fill="#fff" /></svg>
              <Spacer />
              <DialogButton $primary>OK</DialogButton>
              <DialogButton type="button">Annuler</DialogButton>
            </DialogFoot>
          </Dialog>

          <ViewBar>
            <ViewGroup>
              <ViewTool aria-label="Orbite">
                <svg width="17" height="17" viewBox="0 0 17 17" fill="none"><ellipse cx="8" cy="8" rx="3.500" ry="7" stroke="#333" strokeDasharray="14 3" /><ellipse cx="8" cy="8.500" rx="7.500" ry="3" stroke="#333" strokeDasharray="9 2" /><path d="M5 5h6v7H5z" fill="#f1f1f1" /><path d="M8 6v5M5.500 8.500h5" stroke="#1b8bd0" /><path d="M13 5l3 3-4 1z" fill="#333" /></svg><Caret />
              </ViewTool>
              <ViewTool aria-label="Regarder">
                <svg width="17" height="17" viewBox="0 0 17 17" fill="none"><path d="M1 5l11-4v4M1 6.500h15v9H1zM1 3v3" stroke="#333" /><path d="M4.500 9.500h8v3h-8z" stroke="#333" strokeWidth="1.500" /></svg>
              </ViewTool>
              <ViewTool aria-label="Panoramique"><FaRegHandPaper size={16} color="#444" /></ViewTool>
              <ViewTool aria-label="Zoom">
                <svg width="17" height="16" viewBox="0 0 17 16" fill="none"><circle cx="5.500" cy="6.500" r="4.500" fill="#e1eee9" stroke="#555" /><path d="M9 10l5 5" stroke="#333" strokeWidth="2.500" /><path d="M11 4h5M13.500 1.500v5M11 8.500h5" stroke="#333" /></svg>
              </ViewTool>
              <ViewTool aria-label="Zoom fenêtre">
                <svg width="18" height="17" viewBox="0 0 18 17" fill="none"><path d="M1 1h15v15H1z" stroke="#555" strokeDasharray="2 1" /><circle cx="8" cy="7.500" r="6" fill="#e1eee9" stroke="#555" /><path d="M12 12l4 4" stroke="#333" strokeWidth="2.500" /></svg><Caret />
              </ViewTool>
            </ViewGroup>
            <ViewGroup>
              <ViewTool aria-label="Affichage">
                <svg width="16" height="16" viewBox="0 0 16 16"><path d="M.5 1.500h15v10H.5z" fill="#eee" stroke="#334" /><path d="M3 3h10v7H3z" fill="#86a9d8" stroke="#4a6ea8" /><path d="M5 12h6v2h2v1.500H3V14h2z" fill="#556" /></svg><Caret />
              </ViewTool>
              <ViewTool aria-label="Grille">
                <svg width="16" height="16" viewBox="0 0 16 16"><path d="M.5.5h15v15H.5z" fill="#e8e8e8" /><path d="M.5 0v16M3.500 0v16M6.500 0v16M9.500 0v16M12.500 0v16M15.500 0v16M0 .5h16M0 3.500h16M0 6.500h16M0 9.500h16M0 12.500h16M0 15.500h16" stroke="#555" strokeWidth=".9" /></svg><Caret />
              </ViewTool>
              <ViewTool aria-label="Fenêtres">
                <svg width="16" height="14" viewBox="0 0 16 14"><path d="M1 1h6.500v5.500H1zM8.500 1H15v5.500H8.500zM1 7.500h6.500V13H1zM8.500 7.500H15V13H8.500z" fill="#9db9e2" stroke="#2f4a78" /></svg><Caret />
              </ViewTool>
            </ViewGroup>
          </ViewBar>
        </RightDock>
      </Canvas>
    </Page>
  );
}
